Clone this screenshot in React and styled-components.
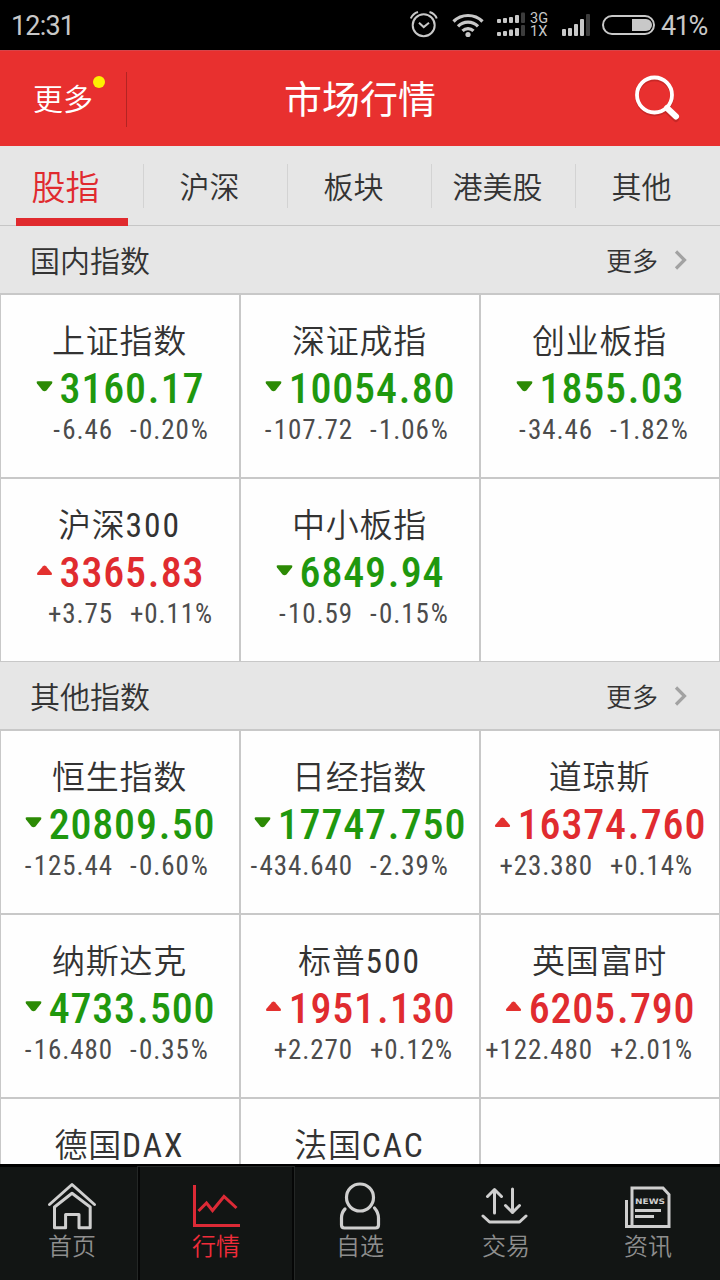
import React from "react";
import styled, { createGlobalStyle, css } from "styled-components";

const GlobalStyle = createGlobalStyle`
  * {
    box-sizing: border-box;
  }
  body {
    margin: 0;
    background: #fff;
    font-family: Roboto, "Noto Sans CJK SC", sans-serif;
    font-weight: 350;
  }
  svg {
    display: block;
    flex: none;
  }
`;

const Screen = styled.div`
  display: flex;
  flex-direction: column;
  width: 720px;
  height: 1280px;
  overflow: hidden;
  background: #fefefe;
  color: #333;
  white-space: nowrap;
`;

/* status bar */

const StatusBar = styled.div`
  display: flex;
  flex: none;
  align-items: center;
  height: 50px;
  padding: 0 13px 0 11px;
  background: #000;
  color: #c8c8c8;
`;

const StatusText = styled.span`
  font-size: 27px;
  font-weight: 450;
  line-height: 50px;
  letter-spacing: ${(props) => props.$spacing};
  padding-top: 2px;
`;

const StatusIcons = styled.div`
  display: flex;
  align-items: center;
  margin-left: auto;
`;

const Network = styled.div`
  display: flex;
  flex-direction: column;
  width: 36px;
  padding-left: 4px;
  font-size: 14.5px;
  font-weight: 400;
  font-stretch: 90%;
  line-height: 13px;
`;

/* header */

const Header = styled.header`
  display: grid;
  flex: none;
  grid-template-columns: 127px 1fr 127px;
  align-items: center;
  height: 96px;
  border-top: 1px solid #d6444a;
  background: #e8302f;
  color: #fff;
`;

const HeaderMore = styled.div`
  position: relative;
  height: 55px;
  padding-left: 33px;
  border-right: 1px solid #b32423;
  font-size: 30px;
  line-height: 55px;
`;

const Dot = styled.i`
  position: absolute;
  top: 4px;
  left: 93px;
  width: 12px;
  height: 12px;
  border-radius: 50%;
  background: #fdf002;
`;

const Title = styled.h1`
  margin: 0;
  font-size: 38px;
  font-weight: 400;
  line-height: 94px;
  text-align: center;
  padding-top: 2px;
`;

const SearchButton = styled.div`
  justify-self: end;
  padding: 0 39px 1px 0;
`;

/* tabs */

const Tabs = styled.nav`
  display: flex;
  flex: none;
  height: 80px;
  border-bottom: 1px solid #c6c6c6;
  background: #e6e6e6;
`;

const Tab = styled.div`
  position: relative;
  flex: 1;
  padding-right: 13px;
  font-size: 30px;
  line-height: 84px;
  text-align: center;

  &:not(:last-child)::after {
    content: "";
    position: absolute;
    top: 18px;
    right: 0;
    width: 1px;
    height: 44px;
    background: #d3d3d3;
  }

  ${(props) =>
    props.$active &&
    css`
      color: #e02a2e;
      font-size: 34px;

      &::before {
        content: "";
        position: absolute;
        left: 16px;
        right: 16px;
        bottom: -1px;
        height: 8px;
        background: #e02a2e;
      }
    `}
`;

/* sections */

const SectionHead = styled.div`
  display: flex;
  flex: none;
  align-items: center;
  height: 68px;
  padding: 0 33px 0 30px;
  border-bottom: 1px solid #c8c8c8;
  background: #e6e6e6;
`;

const SectionTitle = styled.h2`
  flex: 1;
  margin: 0;
  padding-top: 4px;
  font-size: 30px;
  font-weight: inherit;
  line-height: 62px;
`;

const SectionMore = styled.span`
  margin-right: 16px;
  padding-top: 4px;
  font-size: 26px;
  line-height: 62px;
`;

const Grid = styled.div`
  display: grid;
  grid-template-columns: repeat(3, 240px);
  grid-auto-rows: 184px;
`;

const Cell = styled.div`
  padding-top: 24px;
  border: 1px solid #c8c8c8;
  background: #fefefe;
`;

const Name = styled.div`
  margin-bottom: 1px;
  padding-right: 1px;
  font-size: 33px;
  line-height: 46px;
  letter-spacing: 0.8px;
  text-align: center;
`;

const Latin = styled.span`
  font-size: 33.5px;
  font-weight: 400;
  font-stretch: 85%;
  letter-spacing: 2px;
`;

const Quote = styled.div`
  display: flex;
  align-items: center;
  justify-content: center;
  gap: 6px;
  height: 46px;
  color: ${(props) => (props.$up ? "#e02b2f" : "#1f980e")};

  svg {
    margin-bottom: 6px;
  }
`;

const Price = styled.span`
  font-size: 42px;
  font-weight: 500;
  font-stretch: 85%;
  line-height: 48px;
  letter-spacing: 0.8px;
`;

const Point = styled.span`
  margin: 0 0.5px 0 1px;
`;

const Change = styled.div`
  display: grid;
  grid-template-columns: 112px 1fr;
  column-gap: 17px;
  color: #4c4c4c;
  font-size: 27px;
  font-weight: 400;
  font-stretch: 85%;
  line-height: 36px;
  letter-spacing: 0.9px;

  span:first-child {
    justify-self: end;
  }
`;

const Sign = styled.i`
  margin-right: ${(props) => (props.$up ? 0 : 1.5)}px;
  font-style: normal;
`;

const Percent = styled.i`
  margin-left: ${(props) => (props.$up ? 0 : 1)}px;
  font-style: normal;
`;

/* bottom navigation */

const Content = styled.main`
  flex: 1;
  min-height: 0;
  overflow: hidden;
`;

const BottomNav = styled.nav`
  display: flex;
  flex: none;
  height: 116px;
  border-top: 3px solid #000;
  background: #121514;
`;

const NavItem = styled.div`
  position: relative;
  display: flex;
  flex: 1;
  flex-direction: column;
  align-items: center;
  gap: 1px;
  padding-top: 13px;
  color: ${(props) => (props.$active ? "#f02c3a" : "#8e8e8e")};
  font-size: 24px;
  line-height: 32px;

  svg {
    color: ${(props) => (props.$active ? "#dc2a36" : "#cfcfcf")};
  }

  ${(props) =>
    props.$active &&
    css`
      &::before {
        content: "";
        position: absolute;
        inset: 0 -6px 0 -6px;
        border: solid #050606;
        border-width: 0 2px;
        outline: 1px solid #242726;
      }
    `}
`;

const NavLabel = styled.span`
  padding-left: ${(props) => props.$indent || 0}px;
`;

const Spacer = styled.div`
  width: ${(props) => props.$w}px;
`;

const AlarmIcon = () => (
  <svg width="28" height="28" viewBox="0 0 28 28" fill="none" stroke="#c8c8c8" strokeWidth="2">
    <circle cx="13.7" cy="14.3" r="11" />
    <path d="M9 11.8l4.7 4.3 5.3-4.3M0.8 7.5C2 4.5 4.5 2 8 1M26.7 7.5C25.7 4.5 23 2 19.5 1" />
  </svg>
);

const WifiIcon = () => (
  <svg width="32" height="26" viewBox="0 0 32 26" fill="none" stroke="#c8c8c8" strokeWidth="3.2">
    <path d="M1.5 9.5a20.5 20.5 0 0 1 29 0M6 14.3a14 14 0 0 1 20 0M10.5 18.8a8 8 0 0 1 11 0" />
    <circle cx="16" cy="22.5" r="2.6" fill="#c8c8c8" stroke="none" />
  </svg>
);

const bars = (heights, bottom, step, width) =>
  heights.map((h, i) => (
    <rect
      key={`${bottom}-${i}`}
      x={i * step}
      y={bottom - h}
      width={width}
      height={h}
      rx="1"
      fill={i === heights.length - 1 ? "#3c3c3c" : "#c8c8c8"}
    />
  ));

const DualSignalIcon = () => (
  <svg width="29" height="26" viewBox="0 0 29 26">
    {bars([4, 5, 6, 8, 10.5], 11, 6, 4)}
    {bars([4, 5, 6.5, 8, 11], 24, 6, 4)}
  </svg>
);

const SignalIcon = () => (
  <svg width="29" height="24" viewBox="0 0 29 24">
    {bars([7, 8, 12, 17, 22], 23, 6, 4)}
  </svg>
);

const BatteryIcon = () => (
  <svg width="53" height="20" viewBox="0 0 53 20">
    <rect x="1" y="1" width="51" height="18" rx="9" fill="none" stroke="#c8c8c8" strokeWidth="2" />
    <path d="M30 4h14a6 6 0 0 1 0 12H30z" fill="#c8c8c8" />
  </svg>
);

const SearchIcon = () => (
  <svg width="46" height="48" viewBox="0 0 46 48" fill="none" strokeLinecap="round">
    <g stroke="#a82120" opacity="0.5" transform="translate(0 1.5)">
      <circle cx="19.5" cy="20.5" r="17.5" strokeWidth="3.5" />
      <path d="M32 34l9 8.5" strokeWidth="6" />
    </g>
    <g stroke="#fff">
      <circle cx="19.5" cy="20" r="17.5" strokeWidth="3.8" />
      <path d="M32 33l9 8.5" strokeWidth="6" />
    </g>
  </svg>
);

const ChevronIcon = () => (
  <svg width="13" height="20" viewBox="0 0 13 20" fill="none" stroke="#a2a2a2" strokeWidth="3.2">
    <path d="M2 1.5l8.5 8.5L2 18.5" />
  </svg>
);

const Arrow = ({ up }) => (
  <svg width="18" height="11" viewBox="0 0 18 11">
    {up ? (
      <path d="M7 1.2q1.5-1.2 3 0l5.8 6.8q.8 2-.8 2H2q-1.6 0-.8-2z" fill="#e3312f" />
    ) : (
      <path d="M6.500 9.500q2 1.300 4 0l5.500-7Q17 .3 15.200.3H1.800Q0 .3 1 2.500z" fill="#2c8a05" />
    )}
  </svg>
);

const HomeIcon = () => (
  <svg width="50" height="50" viewBox="0 0 50 50" fill="none" stroke="currentColor" strokeWidth="3" strokeLinejoin="round">
    <path d="M2.5 24.5L25 4.5l22.5 20" strokeLinecap="round" />
    <path d="M7.5 27L25 13.2 43.2 27v20.8H32V34.500H18.600v13.300H7.500z" />
  </svg>
);

const ChartIcon = () => (
  <svg width="50" height="50" viewBox="0 0 50 50" fill="none" stroke="currentColor" strokeWidth="3">
    <path d="M3.5 5v40.5H49" />
    <path d="M7.5 31l8-8 6 7.500L33 16.500 45.500 28" />
  </svg>
);

const UserIcon = () => (
  <svg width="50" height="50" viewBox="0 0 50 50" fill="none" stroke="currentColor" strokeWidth="3.2" strokeLinecap="round">
    <circle cx="25" cy="17.5" r="13.5" />
    <path d="M10 29C7 32 6.500 34 6.500 38v7q0 3 3 3h31q3 0 3-3v-7c0-4-.5-6-4-10" />
  </svg>
);

const TradeIcon = () => (
  <svg width="50" height="50" viewBox="0 0 50 50" fill="none" stroke="currentColor" strokeWidth="3" strokeLinecap="round" strokeLinejoin="round">
    <path d="M15.500 33V9.500M8.500 16.500l7-7 7 7M33.500 9v23.500M26.500 25.500l7 7 7-7" />
    <path d="M4 36l6.500 6h30l6.500-6" />
  </svg>
);

const NewsIcon = () => (
  <svg width="50" height="50" viewBox="0 0 50 50" fill="none" stroke="currentColor" strokeWidth="3">
    <path d="M9 46.500V8h31l6 6.500v32H3.500V20" />
    <path d="M12 30.500h26M12 36.500h19" strokeWidth="2.8" />
    <text
      x="12"
      y="24"
      textLength="30"
      lengthAdjust="spacingAndGlyphs"
      fill="currentColor"
      stroke="none"
      fontFamily="'DejaVu Sans', sans-serif"
      fontSize="7.5"
      fontWeight="700"
    >
      NEWS
    </text>
  </svg>
);

const tabs = ["股指", "沪深", "板块", "港美股", "其他"];

const sections = [
  {
    title: "国内指数",
    items: [
      { name: "上证指数", price: "3160.17", diff: "-6.46", rate: "-0.20" },
      { name: "深证成指", price: "10054.80", diff: "-107.72", rate: "-1.06" },
      { name: "创业板指", price: "1855.03", diff: "-34.46", rate: "-1.82" },
      { name: "沪深", latin: "300", price: "3365.83", diff: "+3.75", rate: "+0.11" },
      { name: "中小板指", price: "6849.94", diff: "-10.59", rate: "-0.15" },
      null,
    ],
  },
  {
    title: "其他指数",
    items: [
      { name: "恒生指数", price: "20809.50", diff: "-125.44", rate: "-0.60" },
      { name: "日经指数", price: "17747.750", diff: "-434.640", rate: "-2.39" },
      { name: "道琼斯", price: "16374.760", diff: "+23.380", rate: "+0.14" },
      { name: "纳斯达克", price: "4733.500", diff: "-16.480", rate: "-0.35" },
      { name: "标普", latin: "500", price: "1951.130", diff: "+2.270", rate: "+0.12" },
      { name: "英国富时", price: "6205.790", diff: "+122.480", rate: "+2.01" },
      { name: "德国", latin: "DAX" },
      { name: "法国", latin: "CAC" },
      null,
    ],
  },
];

const navItems = [
  { label: "首页", Icon: HomeIcon },
  { label: "行情", Icon: ChartIcon, active: true },
  { label: "自选", Icon: UserIcon },
  { label: "交易", Icon: TradeIcon, indent: 4 },
  { label: "资讯", Icon: NewsIcon },
];

const IndexName = ({ item }) => (
  <Name>
    {item.name}
    {item.latin && <Latin>{item.latin}</Latin>}
  </Name>
);

const Signed = ({ value, up, percent }) => (
  <span>
    <Sign $up={up}>{value[0]}</Sign>
    {value.slice(1)}
    {percent && <Percent $up={up}>%</Percent>}
  </span>
);

const IndexCell = ({ item }) => {
  if (!item) return <Cell />;
  if (!item.price) {
    return (
      <Cell>
        <IndexName item={item} />
      </Cell>
    );
  }
  const up = item.diff.startsWith("+");
  const [whole, decimals] = item.price.split(".");
  return (
    <Cell>
      <IndexName item={item} />
      <Quote $up={up}>
        <Arrow up={up} />
        <Price>
          {whole}
          <Point>.</Point>
          {decimals}
        </Price>
      </Quote>
      <Change>
        <Signed value={item.diff} up={up} />
        <Signed value={item.rate} up={up} percent />
      </Change>
    </Cell>
  );
};

const App = () => {
  return (
    <Screen>
      <GlobalStyle />
      <StatusBar>
        <StatusText $spacing="-0.8px">12:31</StatusText>
        <StatusIcons>
          <AlarmIcon />
          <Spacer $w={14} />
          <WifiIcon />
          <Spacer $w={13} />
          <DualSignalIcon />
          <Network>
            <span>3G</span>
            <span>1X</span>
          </Network>
          <SignalIcon />
          <Spacer $w={11} />
          <BatteryIcon />
          <Spacer $w={6} />
          <StatusText $spacing="-1.4px">41%</StatusText>
        </StatusIcons>
      </StatusBar>
      <Header>
        <HeaderMore>
          更多
          <Dot />
        </HeaderMore>
        <Title>市场行情</Title>
        <SearchButton>
          <SearchIcon />
        </SearchButton>
      </Header>
      <Tabs>
        {tabs.map((tab, i) => (
          <Tab key={tab} $active={i === 0}>
            {tab}
          </Tab>
        ))}
      </Tabs>
      <Content>
        {sections.map((section) => (
          <section key={section.title}>
            <SectionHead>
              <SectionTitle>{section.title}</SectionTitle>
              <SectionMore>更多</SectionMore>
              <ChevronIcon />
            </SectionHead>
            <Grid>
              {section.items.map((item, i) => (
                <IndexCell key={i} item={item} />
              ))}
            </Grid>
          </section>
        ))}
      </Content>
      <BottomNav>
        {navItems.map(({ label, Icon, active, indent }) => (
          <NavItem key={label} $active={active}>
            <Icon />
            <NavLabel $indent={indent}>{label}</NavLabel>
          </NavItem>
        ))}
      </BottomNav>
    </Screen>
  );
};

export default App;
